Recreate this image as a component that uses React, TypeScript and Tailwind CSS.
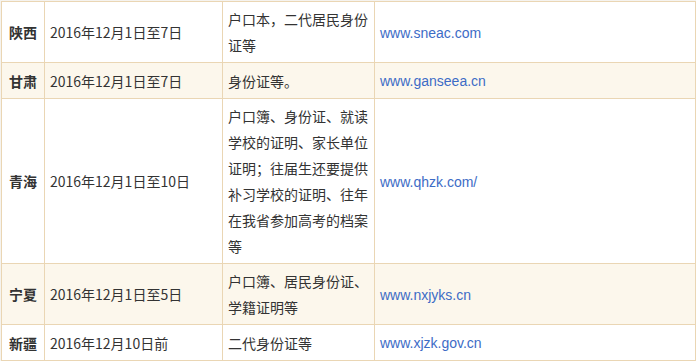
const rows = [
  { prov: "陕西", date: "2016年12月1日至7日", docs: "户口本，二代居民身份证等", url: "www.sneac.com", alt: false },
  { prov: "甘肃", date: "2016年12月1日至7日", docs: "身份证等。", url: "www.ganseea.cn", alt: true },
  {
    prov: "青海",
    date: "2016年12月1日至10日",
    docs: "户口簿、身份证、就读学校的证明、家长单位证明；往届生还要提供补习学校的证明、往年在我省参加高考的档案等",
    url: "www.qhzk.com/",
    alt: false,
  },
  { prov: "宁夏", date: "2016年12月1日至5日", docs: "户口簿、居民身份证、学籍证明等", url: "www.nxjyks.cn", alt: true },
  { prov: "新疆", date: "2016年12月10日前", docs: "二代身份证等", url: "www.xjzk.gov.cn", alt: false },
];

export default function App() {
  return (
    <div
      className="min-h-screen bg-[#f5f3ef] pt-[1px] pl-[1px]"
      style={{ fontFamily: '"Noto Sans CJK SC", "Noto Sans", sans-serif' }}
    >
      <table className="table-fixed border-collapse w-[694px] text-[14px] leading-[26px] text-[#333]">
        <colgroup>
          <col className="w-[43px]" />
          <col className="w-[178px]" />
          <col className="w-[152px]" />
          <col className="w-[321px]" />
        </colgroup>
        <tbody>
          {rows.map((r) => (
            <tr key={r.prov} className={r.alt ? "bg-[#fcf7ec]" : "bg-white"}>
              <td className="border border-[#ead6b4] px-[4px] py-[4px] text-center font-bold align-middle">
                {r.prov}
              </td>
              <td className="border border-[#ead6b4] px-[5px] py-[4px] align-middle">{r.date}</td>
              <td className="border border-[#ead6b4] px-[5px] py-[4px] align-middle">{r.docs}</td>
              <td className="border border-[#ead6b4] px-[5px] py-[4px] align-middle">
                <a className="text-[#3d6cc6] font-['Liberation_Sans',sans-serif]">{r.url}</a>
              </td>
            </tr>
          ))}
        </tbody>
      </table>
    </div>
  );
}
